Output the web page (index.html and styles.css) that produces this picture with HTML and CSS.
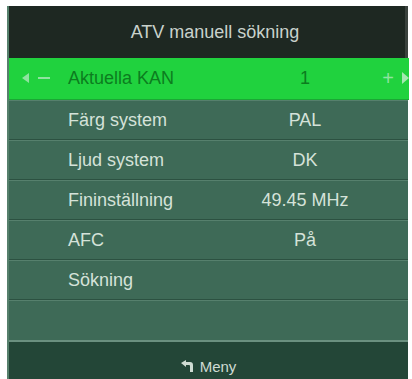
FILE: index.html
```html
<!DOCTYPE html>
<html>
<head>
<meta charset="utf-8">
<link rel="stylesheet" href="styles.css">
</head>
<body>
<div class="panel">
  <div class="header">ATV manuell sökning</div>
  <div class="row active">
    <span class="nav-left"><span class="tri-l"></span><span class="dash"></span></span>
    <span class="label">Aktuella KAN</span>
    <span class="value">1</span>
    <span class="nav-right"><span class="plus">+</span><span class="tri-r"></span></span>
  </div>
  <div class="row"><span class="label">Färg system</span><span class="value">PAL</span></div>
  <div class="row"><span class="label">Ljud system</span><span class="value">DK</span></div>
  <div class="row"><span class="label">Fininställning</span><span class="value">49.45 MHz</span></div>
  <div class="row"><span class="label">AFC</span><span class="value">På</span></div>
  <div class="row"><span class="label">Sökning</span><span class="value"></span></div>
  <div class="row last"><span class="label"></span><span class="value"></span></div>
  <div class="footer">
    <svg class="back" width="13" height="13" viewBox="0 0 13 13">
      <path d="M0 3 L5 0 L5 2 L9 2 Q12 2 12 5 L12 12 L9 12 L9 6 Q9 5 8 5 L5 5 L5 7 Z" fill="#cfdcd3"/>
    </svg>
    <span>Meny</span>
  </div>
</div>
</body>
</html>
```
FILE: styles.css
```css
html, body {
  margin: 0;
  padding: 0;
  background: #ffffff;
  height: 379px;
  overflow: hidden;
}
body {
  padding: 6px 4px 0 7px;
  font-family: "Liberation Sans", Arial, sans-serif;
}
.panel {
  width: 401px;
  display: flex;
  flex-direction: column;
  background: #3e6a57;
  border-left: 2px solid #56806c;
  box-sizing: border-box;
}
.header {
  height: 52px;
  background: #1e2822;
  color: #c9d2cc;
  font-size: 18px;
  display: flex;
  align-items: center;
  justify-content: center;
  padding-left: 16px;
  border-right: 3px solid #3a423d;
}
.row {
  height: 40px;
  box-sizing: border-box;
  display: flex;
  align-items: center;
  position: relative;
  color: #d5e2d9;
  font-size: 18px;
  border-top: 1px solid #56806d;
  border-bottom: 1px solid #2c5141;
}
.row.last {
  height: 42px;
  border-bottom: 2px solid #6a907f;
}
.row.active {
  height: 42px;
  background: #20d23e;
  color: #0c7d1e;
  border-top: none;
  border-bottom: 1px solid #1aa834;
  margin-right: -1px;
}
.label {
  width: 235px;
  padding-left: 59px;
  box-sizing: border-box;
  white-space: nowrap;
}
.value {
  width: 122px;
  text-align: center;
}
.nav-left {
  position: absolute;
  left: 13px;
  top: 15px;
  display: flex;
  align-items: center;
  gap: 9px;
}
.tri-l {
  width: 0;
  height: 0;
  border-top: 5px solid transparent;
  border-bottom: 5px solid transparent;
  border-right: 7px solid #8fe3a0;
}
.dash {
  width: 12px;
  height: 2px;
  background: #8fe3a0;
}
.nav-right {
  position: absolute;
  right: 0;
  top: 10px;
  display: flex;
  align-items: center;
  gap: 8px;
}
.plus {
  color: #8fe3a0;
  font-size: 20px;
  line-height: 20px;
}
.tri-r {
  width: 0;
  height: 0;
  border-top: 6px solid transparent;
  border-bottom: 6px solid transparent;
  border-left: 7px solid #a4e8b2;
}
.footer {
  height: 48px;
  background: #234637;
  color: #cfdcd3;
  font-size: 15px;
  display: flex;
  align-items: center;
  justify-content: center;
  gap: 6px;
  box-sizing: border-box;
}
.back {
  display: block;
}
```
